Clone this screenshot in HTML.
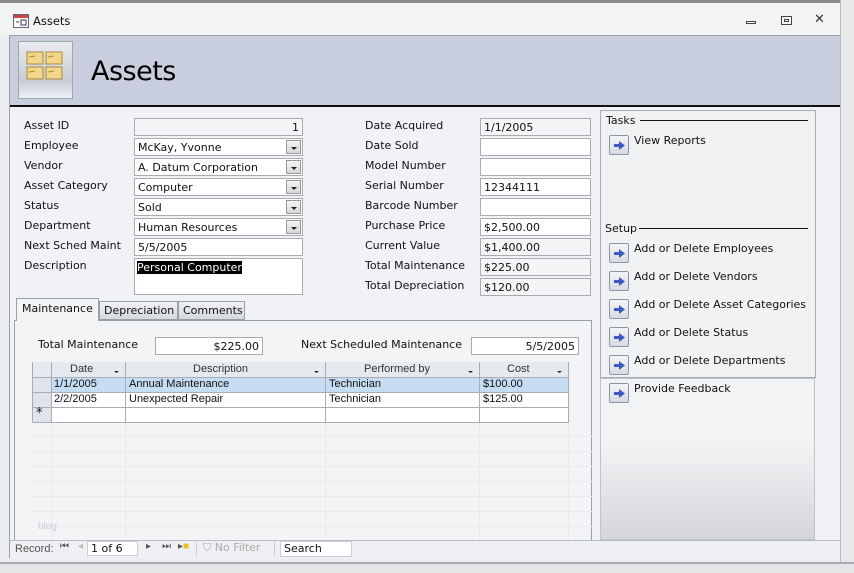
<!DOCTYPE html>
<html><head><meta charset="utf-8"><style>
*{box-sizing:border-box;margin:0;padding:0}
body{width:854px;height:573px;background:#eceef1;position:relative;overflow:hidden;font-family:"DejaVu Sans","Liberation Sans",sans-serif;font-size:11px;color:#111}
.a{position:absolute;white-space:nowrap}
.in{position:absolute;background:#fff;border:1px solid #a8abb2;height:18px;padding:1px 3px;font-size:11px;line-height:15px;white-space:nowrap;overflow:hidden}
.r{text-align:right}
.dd{position:absolute;right:1px;top:1px;width:15px;height:14px;background:linear-gradient(#f4f4f4,#d8d8d8);border:1px solid #999}
.dd:after{content:"";position:absolute;left:4px;top:6px;border-left:3px solid transparent;border-right:3px solid transparent;border-top:3px solid #222}
.lbl{position:absolute;font-size:11px;white-space:nowrap}
.btn{position:absolute;width:20px;height:20px;border:1px solid #8d96a6;border-radius:2px;background:linear-gradient(#f5f6f8,#d6dae2)}
.btn svg{position:absolute;left:4px;top:5px}
.g{font-family:"Liberation Sans",sans-serif;font-size:11px}
</style></head><body>
<div class="a" style="left:0;top:0;width:854px;height:3px;background:#8a8a8a"></div>
<div class="a" style="left:0;top:3px;width:854px;height:32px;background:#f3f4f6"></div>
<svg class="a" style="left:13px;top:14px" width="16" height="14"><rect x="0.5" y="0.5" width="15" height="13" fill="#fff" stroke="#667"/><rect x="1" y="1" width="14" height="3" fill="#c44"/><line x1="3" y1="8" x2="6" y2="8" stroke="#336"/><rect x="8" y="6" width="5" height="5" fill="none" stroke="#336"/></svg>
<div class="a" style="left:33px;top:14px;font-size:11.5px">Assets</div>
<div class="a" style="left:746px;top:21px;width:10px;height:3px;border:1px solid #444"></div>
<div class="a" style="left:781px;top:16px;width:11px;height:9px;border:1px solid #444"><div style="margin:2px auto;width:5px;height:3px;border:1px solid #444"></div></div>
<div class="a" style="left:814px;top:12px;font-size:13px;color:#333">✕</div>
<div class="a" style="left:9px;top:35px;width:832px;height:523px;border:1px solid #9aa0aa;background:#f0f2f5"></div>
<div class="a" style="left:10px;top:36px;width:830px;height:69px;background:#c9cede"></div>
<div class="a" style="left:10px;top:105px;width:830px;height:2px;background:#111"></div>
<div class="a" style="left:18px;top:41px;width:55px;height:58px;border:1px solid #9aa;background:linear-gradient(#e9ebef,#c8ccd6 70%,#eef0f4)"></div>
<svg class="a" style="left:26px;top:50px" width="38" height="32"><g fill="#f2d78a" stroke="#a98a3a"><rect x="1" y="2" width="16" height="12"/><rect x="20" y="2" width="16" height="12"/><rect x="1" y="17" width="16" height="12"/><rect x="20" y="17" width="16" height="12"/></g><g stroke="#a98a3a"><line x1="3" y1="7" x2="9" y2="6"/><line x1="22" y1="7" x2="28" y2="6"/><line x1="3" y1="22" x2="9" y2="21"/><line x1="22" y1="22" x2="28" y2="21"/></g></svg>
<div class="a" style="left:91px;top:56px;font-family:'DejaVu Sans',sans-serif;font-size:27px;color:#000;letter-spacing:-0.5px">Assets</div>
<div class="a" style="left:840px;top:0;width:14px;height:573px;background:#e8e9eb;border-left:1px solid #b8bbc0"></div>
<div class="a" style="left:0;top:562px;width:854px;height:11px;background:#e4e5e7;border-top:2px solid #a8abb0"></div>

<div class="lbl" style="left:24px;top:119px">Asset ID</div>
<div class="lbl" style="left:24px;top:139px">Employee</div>
<div class="lbl" style="left:24px;top:159px">Vendor</div>
<div class="lbl" style="left:24px;top:179px">Asset Category</div>
<div class="lbl" style="left:24px;top:199px">Status</div>
<div class="lbl" style="left:24px;top:219px">Department</div>
<div class="lbl" style="left:24px;top:239px">Next Sched Maint</div>
<div class="lbl" style="left:24px;top:259px">Description</div>
<div class="in r" style="left:134px;top:118px;width:169px;background:#f4f5f7">1</div>
<div class="in" style="left:134px;top:138px;width:169px">McKay, Yvonne<div class="dd"></div></div>
<div class="in" style="left:134px;top:158px;width:169px">A. Datum Corporation<div class="dd"></div></div>
<div class="in" style="left:134px;top:178px;width:169px">Computer<div class="dd"></div></div>
<div class="in" style="left:134px;top:198px;width:169px">Sold<div class="dd"></div></div>
<div class="in" style="left:134px;top:218px;width:169px">Human Resources<div class="dd"></div></div>
<div class="in" style="left:134px;top:238px;width:169px">5/5/2005</div>
<div class="in" style="left:134px;top:258px;width:169px;height:37px;padding-left:2px"><span style="background:#000;color:#fff">Personal Computer</span></div>

<div class="lbl" style="left:365px;top:119px">Date Acquired</div>
<div class="lbl" style="left:365px;top:139px">Date Sold</div>
<div class="lbl" style="left:365px;top:159px">Model Number</div>
<div class="lbl" style="left:365px;top:179px">Serial Number</div>
<div class="lbl" style="left:365px;top:199px">Barcode Number</div>
<div class="lbl" style="left:365px;top:219px">Purchase Price</div>
<div class="lbl" style="left:365px;top:239px">Current Value</div>
<div class="lbl" style="left:365px;top:259px">Total Maintenance</div>
<div class="lbl" style="left:365px;top:279px">Total Depreciation</div>
<div class="in" style="left:480px;top:118px;width:111px;background:#f4f5f7">1/1/2005</div>
<div class="in" style="left:480px;top:138px;width:111px"></div>
<div class="in" style="left:480px;top:158px;width:111px"></div>
<div class="in" style="left:480px;top:178px;width:111px">12344111</div>
<div class="in" style="left:480px;top:198px;width:111px"></div>
<div class="in" style="left:480px;top:218px;width:111px">$2,500.00</div>
<div class="in" style="left:480px;top:238px;width:111px;background:#f4f5f7">$1,400.00</div>
<div class="in" style="left:480px;top:258px;width:111px;background:#f4f5f7">$225.00</div>
<div class="in" style="left:480px;top:278px;width:111px;background:#f4f5f7">$120.00</div>

<div class="a" style="left:14px;top:320px;width:578px;height:221px;border:1px solid #9aa0aa;background:#f3f4f6"></div>
<div class="a" style="left:16px;top:298px;width:83px;height:23px;border:1px solid #9aa0aa;border-bottom:none;background:#f3f4f6;padding:3px 5px">Maintenance</div>
<div class="a" style="left:99px;top:301px;width:79px;height:19px;border:1px solid #9aa0aa;background:linear-gradient(#f0f1f3,#d6d9de);padding:2px 4px">Depreciation</div>
<div class="a" style="left:178px;top:301px;width:67px;height:19px;border:1px solid #9aa0aa;background:linear-gradient(#f0f1f3,#d6d9de);padding:2px 4px">Comments</div>
<div class="lbl" style="left:38px;top:338px">Total Maintenance</div>
<div class="in r" style="left:155px;top:337px;width:108px">$225.00</div>
<div class="lbl" style="left:301px;top:338px">Next Scheduled Maintenance</div>
<div class="in r" style="left:471px;top:337px;width:108px">5/5/2005</div>

<svg class="a" style="left:32px;top:362px" width="560" height="178">
<g stroke="#e8eaee"><line x1="19.5" y1="60" x2="19.5" y2="178"/><line x1="93.5" y1="60" x2="93.5" y2="178"/><line x1="293.5" y1="60" x2="293.5" y2="178"/><line x1="447.5" y1="60" x2="447.5" y2="178"/><line x1="536.5" y1="0" x2="536.5" y2="178"/>
<line x1="0" y1="74.5" x2="560" y2="74.5"/><line x1="0" y1="89.5" x2="560" y2="89.5"/><line x1="0" y1="104.5" x2="560" y2="104.5"/><line x1="0" y1="119.5" x2="560" y2="119.5"/><line x1="0" y1="134.5" x2="560" y2="134.5"/><line x1="0" y1="149.5" x2="560" y2="149.5"/><line x1="0" y1="164.5" x2="560" y2="164.5"/></g>
<rect x="0" y="0" width="537" height="15" fill="#e6e9ee"/>
<rect x="0" y="15" width="19" height="45" fill="#dfe3ea"/>
<rect x="19" y="15" width="518" height="15" fill="#c5dcf2"/>
<rect x="19" y="30" width="518" height="30" fill="#fff"/>
<g stroke="#a8acb4" fill="none"><line x1="0" y1="15.5" x2="537" y2="15.5"/><line x1="0" y1="30.5" x2="537" y2="30.5"/><line x1="0" y1="45.5" x2="537" y2="45.5"/><line x1="0" y1="60.5" x2="537" y2="60.5"/>
<line x1="19.5" y1="0" x2="19.5" y2="60"/><line x1="93.5" y1="0" x2="93.5" y2="60"/><line x1="293.5" y1="0" x2="293.5" y2="60"/><line x1="447.5" y1="0" x2="447.5" y2="60"/><line x1="536.5" y1="0" x2="536.5" y2="60"/><line x1="0.5" y1="0" x2="0.5" y2="60"/></g>
<g fill="#222"><path d="M82 9h5l-2.5 2z"/><path d="M282 9h5l-2.5 2z"/><path d="M436 9h5l-2.5 2z"/><path d="M525 9h5l-2.5 2z"/></g>
</svg>
<div class="a g" style="left:70px;top:363px;color:#333">Date</div>
<div class="a g" style="left:193px;top:363px;color:#333">Description</div>
<div class="a g" style="left:364px;top:363px;color:#333">Performed by</div>
<div class="a g" style="left:507px;top:363px;color:#333">Cost</div>
<div class="a g" style="left:54px;top:378px">1/1/2005</div>
<div class="a g" style="left:129px;top:378px">Annual Maintenance</div>
<div class="a g" style="left:329px;top:378px">Technician</div>
<div class="a g" style="left:483px;top:378px">$100.00</div>
<div class="a g" style="left:54px;top:393px">2/2/2005</div>
<div class="a g" style="left:129px;top:393px">Unexpected Repair</div>
<div class="a g" style="left:329px;top:393px">Technician</div>
<div class="a g" style="left:483px;top:393px">$125.00</div>
<div class="a" style="left:36px;top:406px;font-size:13px">*</div>
<div class="a g" style="left:38px;top:521px;color:#ccd;font-size:10px">blog</div>

<div class="a" style="left:10px;top:540px;width:830px;height:18px;background:#eef0f3;border-top:1px solid #b8bcc4"></div>
<div class="a g" style="left:15px;top:543px;color:#555">Record:</div>
<div class="a g" style="left:60px;top:541px;color:#555;font-size:10px">⏮</div>
<div class="a g" style="left:78px;top:541px;color:#bbb;font-size:10px">◂</div>
<div class="a" style="left:87px;top:541px;width:51px;height:15px;background:#fff;border:1px solid #ccd;padding:0 3px;font-size:11px">1 of 6</div>
<div class="a g" style="left:146px;top:541px;color:#555;font-size:10px">▸</div>
<div class="a g" style="left:162px;top:541px;color:#555;font-size:10px">⏭</div>
<div class="a g" style="left:178px;top:541px;color:#555;font-size:10px">▸<span style="color:#e8c020">■</span></div>
<div class="a" style="left:196px;top:541px;width:79px;height:16px;border-left:1px solid #ccd;border-right:1px solid #ccd;padding-left:6px;color:#aaa;font-size:11px">⛉ No Filter</div>
<div class="a" style="left:280px;top:541px;width:72px;height:16px;background:#fff;border:1px solid #ccd;padding-left:3px;font-size:11px">Search</div>

<div class="a" style="left:600px;top:110px;width:216px;height:268px;border:1px solid #a8acb4;background:#f1f2f4"></div>
<div class="a" style="left:600px;top:378px;width:215px;height:162px;border:1px solid #c0c3c8;background:linear-gradient(#f2f3f5 40%,#d4d6d9)"></div>
<div class="lbl" style="left:606px;top:114px">Tasks</div>
<div class="a" style="left:640px;top:120px;width:168px;height:1px;background:#111"></div>
<div class="lbl" style="left:605px;top:222px">Setup</div>
<div class="a" style="left:639px;top:228px;width:169px;height:1px;background:#111"></div>
<div class="btn" style="left:609px;top:135px"><svg width="11" height="9"><path d="M0 3h5V0l6 4.5-6 4.5V6H0z" fill="#3a5cc0"/></svg></div>
<div class="lbl" style="left:634px;top:134px">View Reports</div>
<div class="btn" style="left:609px;top:243px"><svg width="11" height="9"><path d="M0 3h5V0l6 4.5-6 4.5V6H0z" fill="#3a5cc0"/></svg></div>
<div class="lbl" style="left:634px;top:242px">Add or Delete Employees</div>
<div class="btn" style="left:609px;top:271px"><svg width="11" height="9"><path d="M0 3h5V0l6 4.5-6 4.5V6H0z" fill="#3a5cc0"/></svg></div>
<div class="lbl" style="left:634px;top:270px">Add or Delete Vendors</div>
<div class="btn" style="left:609px;top:299px"><svg width="11" height="9"><path d="M0 3h5V0l6 4.5-6 4.5V6H0z" fill="#3a5cc0"/></svg></div>
<div class="lbl" style="left:634px;top:298px">Add or Delete Asset Categories</div>
<div class="btn" style="left:609px;top:327px"><svg width="11" height="9"><path d="M0 3h5V0l6 4.5-6 4.5V6H0z" fill="#3a5cc0"/></svg></div>
<div class="lbl" style="left:634px;top:326px">Add or Delete Status</div>
<div class="btn" style="left:609px;top:355px"><svg width="11" height="9"><path d="M0 3h5V0l6 4.5-6 4.5V6H0z" fill="#3a5cc0"/></svg></div>
<div class="lbl" style="left:634px;top:354px">Add or Delete Departments</div>
<div class="btn" style="left:609px;top:383px"><svg width="11" height="9"><path d="M0 3h5V0l6 4.5-6 4.5V6H0z" fill="#3a5cc0"/></svg></div>
<div class="lbl" style="left:634px;top:382px">Provide Feedback</div>
</body></html>
